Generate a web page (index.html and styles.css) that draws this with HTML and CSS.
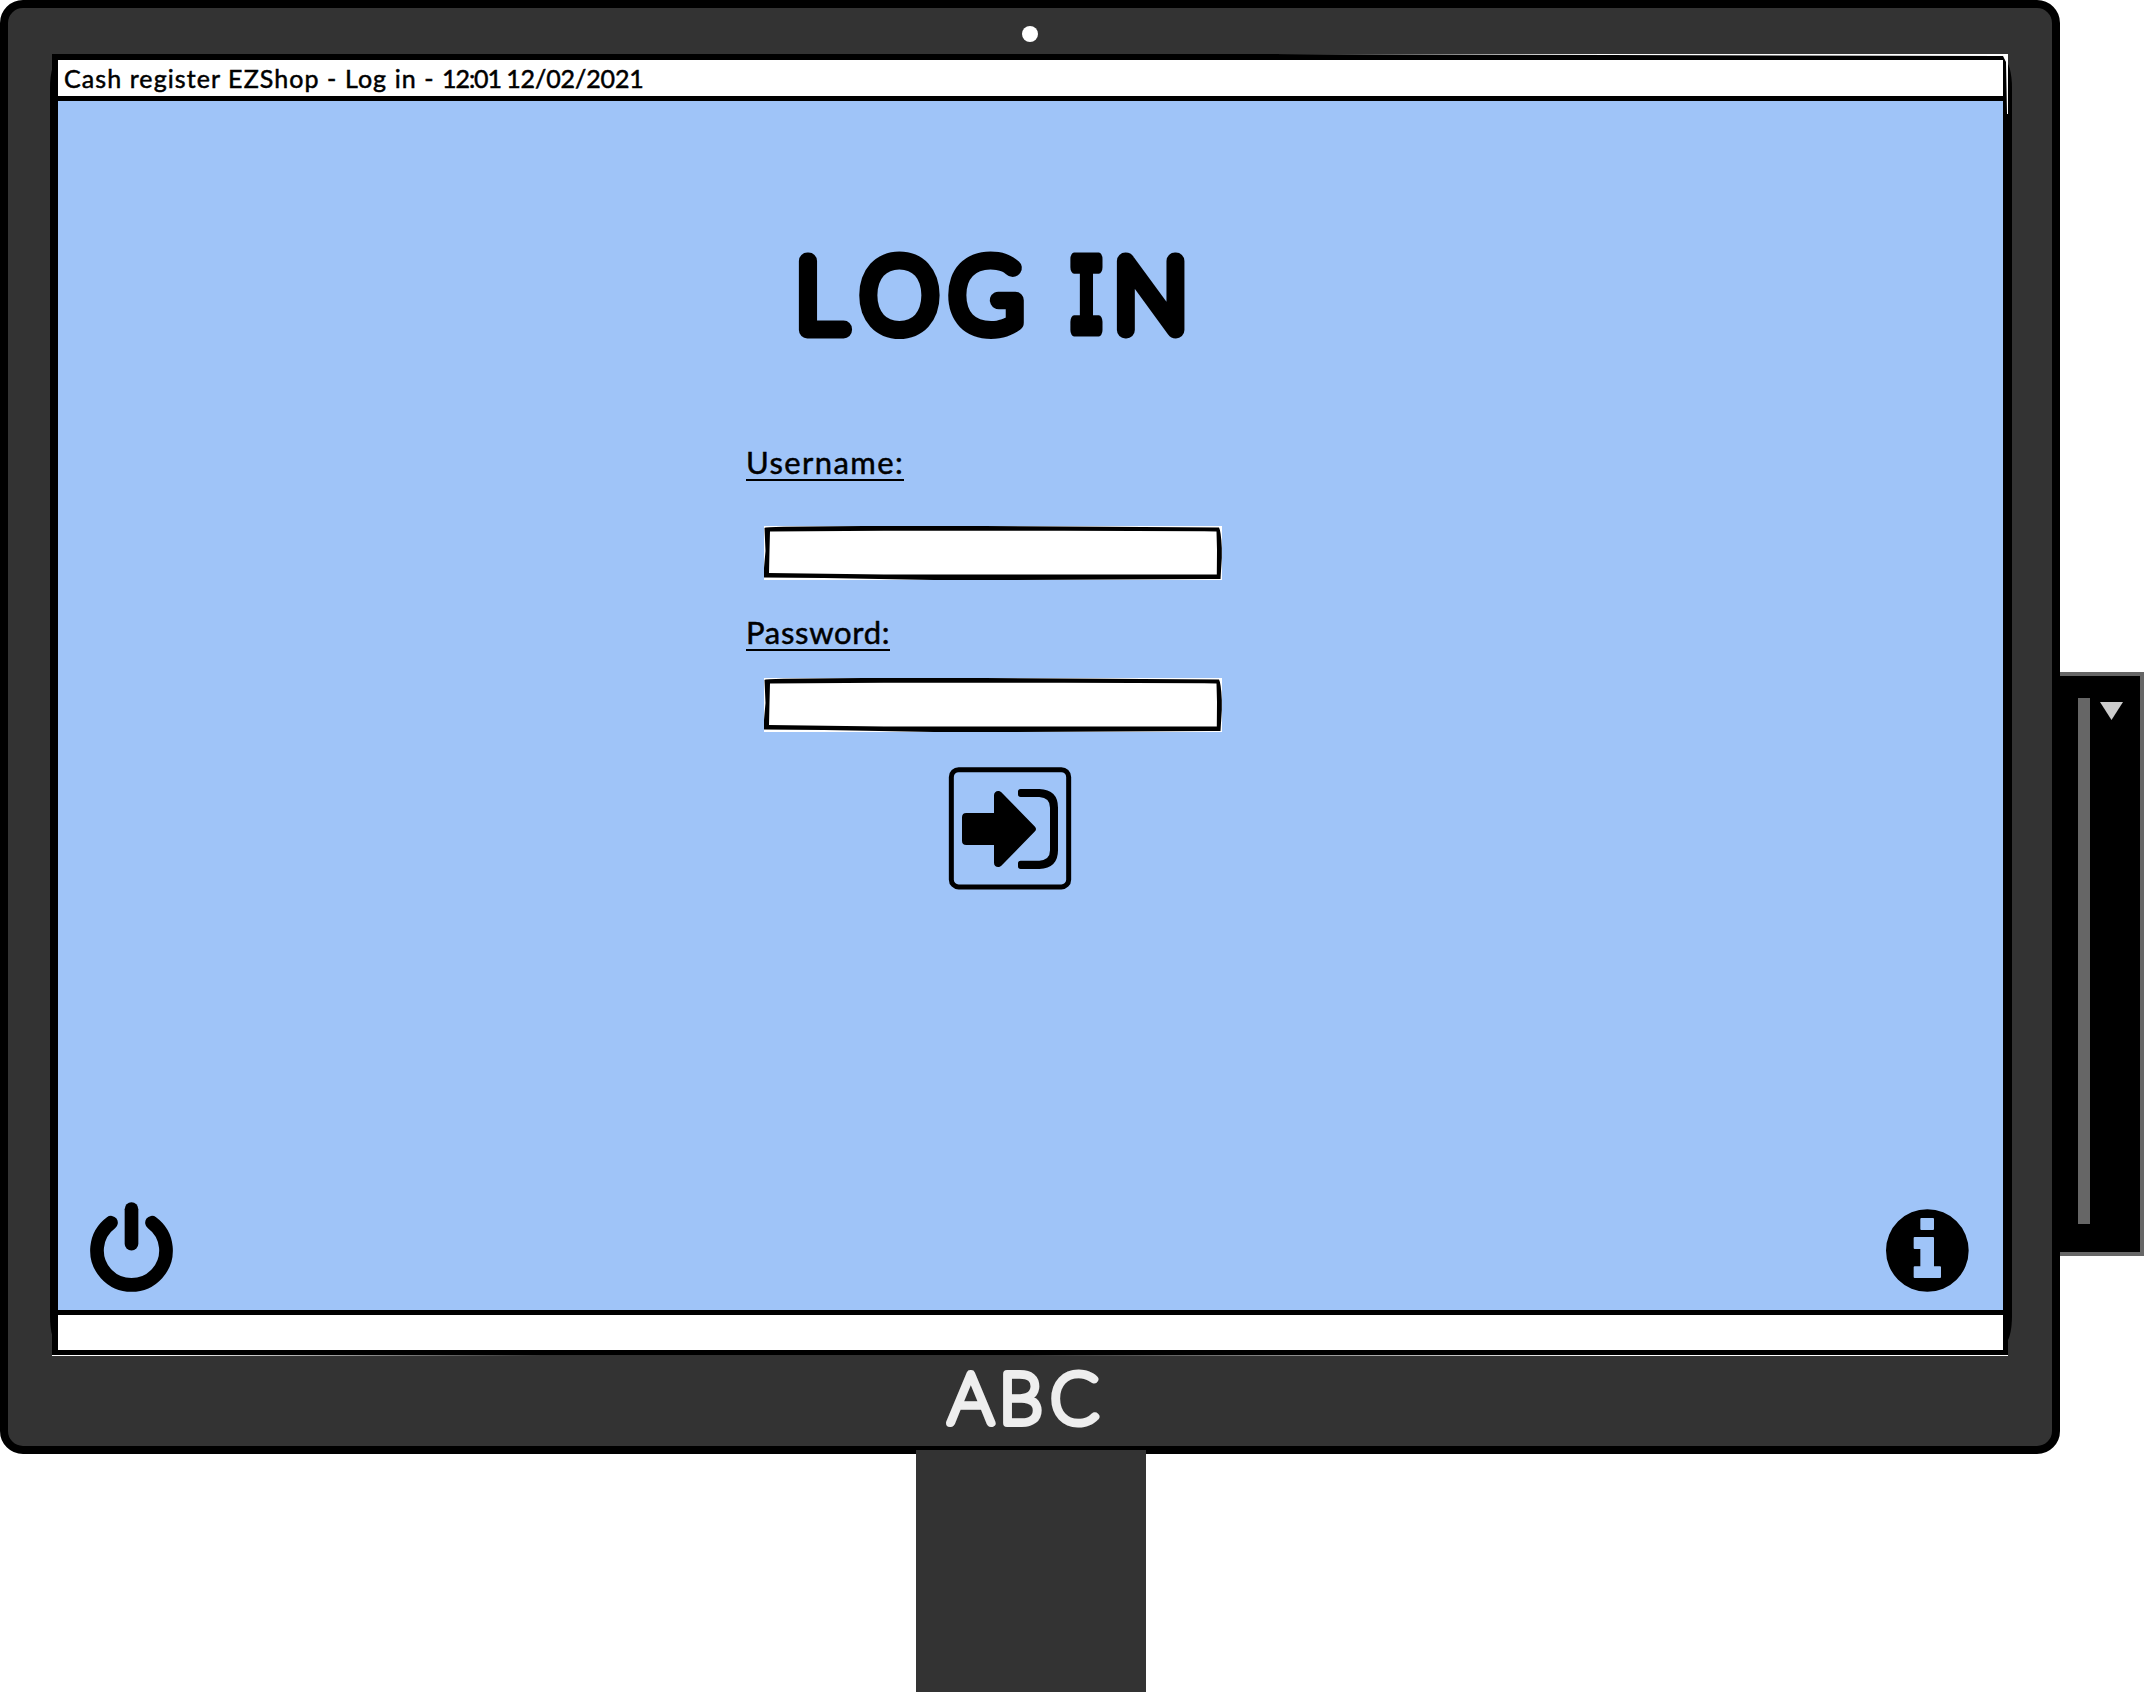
FILE: index.html
```html
<!DOCTYPE html>
<html lang="en">
<head>
<meta charset="utf-8">
<title>Cash register EZShop - Log in</title>
<link rel="stylesheet" href="styles.css">
</head>
<body>
<div class="scene">
  <div class="computer">
    <div class="monitor">
      <span class="camera"></span>
      <div class="screen">
        <header class="titlebar"><span class="titlebar-text">Cash register EZShop - Log in - <span class="time">12:01 </span><span class="date">12/02/2021</span></span></header>
        <main class="desktop">
          <h1 class="heading">
            <svg width="420" height="160" viewBox="785 215 420 160"><text class="heading-text" y="330" x="796 861 950">LOG</text><text class="heading-text heading-serif" transform="translate(1086.500 330) scale(.57 1)" text-anchor="middle">I</text><text class="heading-text" x="1114" y="330">N</text></svg>
          </h1>
          <form class="login">
            <label class="label label-user" for="user">Username:</label>
            <div class="field">
              <svg class="field-frame" viewBox="0 0 458 54"><path fill-rule="evenodd" d="M.5 2Q1 1 20 .8L100 .1H220L340 .8L455 1.6Q457 5 457.800 22V32L456.500 53H445L250 53.900H170L60 52L0 51.500V42L1.500 25ZM6 5.500L5.500 24L5 47L120 48.500H452.800L453 24L452.500 5.500L440 5.300L300 4.800H120Z"/></svg>
              <input class="input" id="user" type="text">
            </div>
            <label class="label label-pass" for="pass">Password:</label>
            <div class="field">
              <svg class="field-frame" viewBox="0 0 458 54"><path fill-rule="evenodd" d="M.5 2Q1 1 20 .8L100 .1H220L340 .8L455 1.6Q457 5 457.800 22V32L456.500 53H445L250 53.900H170L60 52L0 51.500V42L1.500 25ZM6 5.500L5.500 24L5 47L120 48.500H452.800L453 24L452.500 5.500L440 5.300L300 4.800H120Z"/></svg>
              <input class="input" id="pass" type="password">
            </div>
            <button class="submit" type="button" aria-label="Log in">
              <svg width="123" height="123" viewBox="57 51 369 369">
                <rect x="64" y="59" width="352" height="352" rx="22" fill="none" stroke="#000" stroke-width="15"/>
                <path d="M96 202q0-13 13-13H192V136c0-13 14-17 22-9L315 230q6 7 0 14L214 347c-8 8-22 4-22-9V285H109q-13 0-13-13z"/>
                <path d="M272 117H328Q384 119 384 173V301Q384 355 328 357H272Q264 357 264 349V340Q264 332 272 332H328Q360 330 360 301V173Q360 143 328 141H272Q264 141 264 133V125Q264 117 272 117Z"/>
              </svg>
            </button>
          </form>
          <footer class="actions">
            <svg class="power" width="83" height="90" viewBox="89 67 249 270"><g fill="none" stroke="#000" stroke-width="41" stroke-linecap="round"><path d="M213.500 88.500V192"/><path d="M152 129A103.500 103.500 0 1 0 275 129"/></g></svg>
            <svg class="info" width="83" height="83" viewBox="78 87 249 249"><path fill-rule="evenodd" d="M202 87.500a124 124 0 1 1 0 248a124 124 0 1 1 0-248zM184 114q-3 0-3 3v30q0 3 3 3h35q3 0 3-3v-30q0-3-3-3zM164 171q-3 0-3 3v30q0 3 3 3h17V259h-17q-3 0-3 3v29q0 3 3 3h76q3 0 3-3v-29q0-3-3-3h-18V174q0-3-3-3z"/></svg>
          </footer>
        </main>
        <div class="statusbar"></div>
      </div>
      <div class="brand">
        <svg width="180" height="80" viewBox="935 1357 180 80"><text class="brand-text" x="943.500 994 1045.500" y="1423">ABC</text></svg>
      </div>
    </div>
    <div class="stand"></div>
  </div>
  <aside class="reader">
    <span class="reader-slot"></span>
    <span class="reader-arrow"></span>
  </aside>
</div>
</body>
</html>
```

FILE: styles.css
```css
* { box-sizing: border-box; }

body {
  margin: 0;
  background: #fff;
  color: #000;
  font-family: Lato, "Liberation Sans", sans-serif;
  overflow: hidden;
}

svg { display: block; overflow: visible; }

.scene { display: flex; align-items: flex-start; width: 2144px; height: 1692px; overflow: hidden; }

.computer { display: flex; flex-direction: column; align-items: center; width: 2060px; }

/* Monitor casing */
.monitor {
  position: relative;
  display: flex;
  flex-direction: column;
  align-items: center;
  width: 2060px;
  height: 1454px;
  padding-top: 18px;
  border: 8px solid #000;
  border-radius: 23px;
  background: #333;
}

/* Dark bezel behind the screen */
.monitor::before {
  content: "";
  position: absolute;
  left: 42px;
  top: 52px;
  width: 1962px;
  height: 1284px;
  background: #000;
  border-radius: 8px / 28px;
}

.camera { width: 16px; height: 16px; border-radius: 50%; background: #fff; }

.screen {
  position: relative;
  display: flex;
  flex-direction: column;
  width: 1956px;
  height: 1301px;
  margin-top: 12px;
  background: #fff;
  border: solid #000;
  border-width: 6px 5px 5px 6px;
}

/* Slivers of white along the uneven hand-drawn outline */
.screen::before {
  content: "";
  position: absolute;
  top: -6px;
  right: -5px;
  width: 760px;
  height: 60px;
  background: #fff;
  clip-path: polygon(0 0, 100% 0, 100% 60px, 759px 60px, 758px 8px, 755px 2px);
}
.screen::after {
  content: "";
  position: absolute;
  left: -6px;
  right: -5px;
  bottom: -6px;
  height: 1px;
  background: linear-gradient(90deg, #fff 5%, #333 25% 50%, #fff 80%);
}

.titlebar {
  display: flex;
  align-items: center;
  height: 41px;
  padding-left: 6px;
  border-bottom: 5px solid #000;
}

.titlebar-text { font-size: 25px; line-height: 36px; letter-spacing: 1.08px; white-space: pre; -webkit-text-stroke: 0.5px #000; }
.time { letter-spacing: -1.1px; }
.date { letter-spacing: -0.1px; }

.desktop { display: flex; flex-direction: column; height: 1209px; background: #9fc4f8; }

.heading { margin: 114px 0 0 727px; }
.heading-text { font-family: Lato, sans-serif; font-weight: 100; font-size: 98px; stroke: #000; stroke-width: 17px; stroke-linejoin: round; stroke-linecap: round; }
.heading-serif { font-family: "Liberation Mono", monospace; font-weight: 400; font-size: 108px; stroke-width: 13px; }

.login { display: flex; flex-direction: column; align-items: flex-start; margin: 72px 0 0 688px; }

.label {
  height: 34px;
  font-size: 31px;
  line-height: 31px;
  border-bottom: 2px solid #000;
  -webkit-text-stroke: 0.5px #000;
}
.label-user { margin-bottom: 45px; letter-spacing: 1.4px; }
.label-pass { margin: 37px 0 27px; letter-spacing: 0.7px; }

.field { position: relative; width: 458px; height: 54px; margin-left: 18px; background: #fff; }
.field-frame { position: absolute; inset: 0; width: 458px; height: 54px; pointer-events: none; }
.input { width: 100%; height: 100%; padding: 0 12px; border: 0; background: transparent; font: inherit; font-size: 28px; }

.submit { margin: 35px 0 0 203px; padding: 0; border: 0; background: none; }

.actions { display: flex; justify-content: space-between; align-items: flex-end; margin-top: auto; padding: 0 34px 18px 32px; }

.statusbar { flex: 1; border-top: 5px solid #000; }

.brand { margin-top: 2px; }
.brand-text { font-family: Lato, sans-serif; font-weight: 100; font-size: 70px; fill: #eee; stroke: #eee; stroke-width: 8px; stroke-linejoin: round; }

.stand { position: relative; width: 230px; height: 242px; margin: -4px 0 0 2px; background: #333; }

/* Card reader on the right edge */
.reader {
  display: flex;
  align-items: flex-start;
  width: 84px;
  height: 584px;
  margin-top: 672px;
  padding: 22px 0 0 18px;
  border: solid #666;
  border-width: 4px 4px 4px 0;
  background: #000;
}
.reader-slot { width: 12px; height: 526px; background: #666; }
.reader-arrow { width: 23px; height: 18px; margin: 4px 0 0 10px; background: #ccc; clip-path: polygon(0 0, 100% 0, 50% 100%); }
```
